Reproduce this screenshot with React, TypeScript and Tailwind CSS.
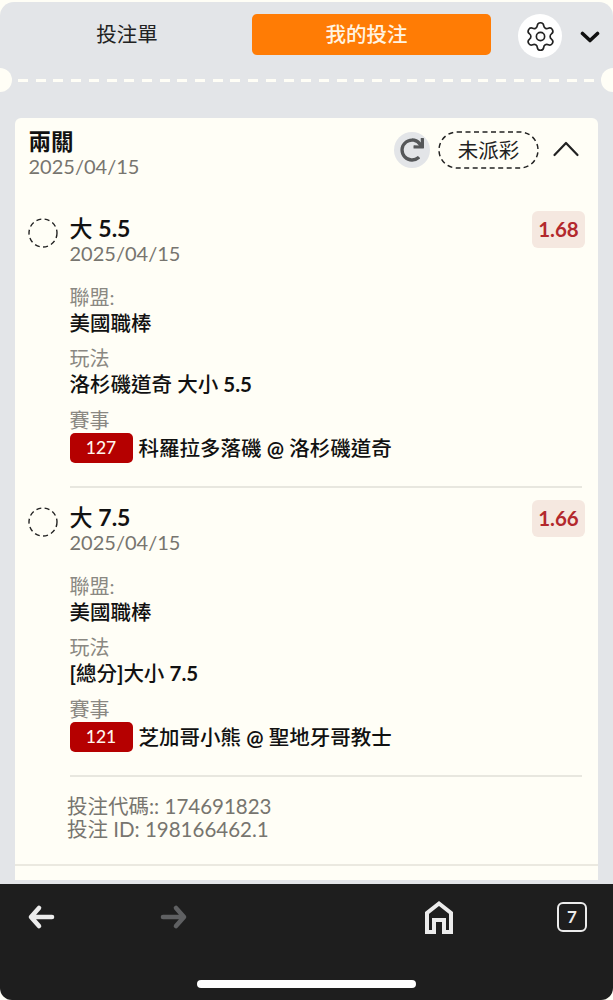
import React from "react";
import { Settings } from "lucide-react";
import { FaRedo } from "react-icons/fa";

function Leg(props: { pick: React.ReactNode; odds: string; play: React.ReactNode; num: string; match: React.ReactNode }) {
  return (
    <div className="flex flex-col">
      <div className="flex items-start pl-[13px] pr-[13px]">
        <svg className="mt-[7px] shrink-0" width="30" height="30" viewBox="0 0 30 30" fill="none" stroke="#222" strokeWidth="1.4" strokeDasharray="5 3.4">
          <circle cx="15" cy="15" r="14" />
        </svg>
        <div className="ml-[11.5px] flex-1">
          <div className="mt-[3px] text-[23px] leading-[28px] font-medium text-[#111]">{props.pick}</div>
          <div className="text-[20px] leading-[23px] text-[#77756f]">2025/04/15</div>
        </div>
        <div className="flex h-[37px] w-[53px] items-center justify-center rounded-[6px] bg-[#f5e8e0] text-[20.5px] font-bold text-[#b3282d]">{props.odds}</div>
      </div>
      <div className="ml-[54.5px] mr-[16px] mt-[19px] flex flex-col">
        <div className="text-[20px] leading-[27px] text-[#8a8882]">聯盟:</div>
        <div className="text-[20.5px] leading-[24px] font-medium text-[#111]">美國職棒</div>
        <div className="mt-[10px] text-[20px] leading-[27px] text-[#8a8882]">玩法</div>
        <div className="text-[20.5px] leading-[25px] font-medium text-[#111]">{props.play}</div>
        <div className="mt-[10px] text-[20px] leading-[27px] text-[#8a8882]">賽事</div>
        <div className="mt-[-1px] flex items-center">
          <div className="flex h-[30px] w-[63px] items-center justify-center rounded-[5px] bg-[#b50000] text-[17.5px] font-medium text-[#fff6ee]">{props.num}</div>
          <div className="ml-[6px] text-[20.5px] leading-[30px] font-medium text-[#111]">{props.match}</div>
        </div>
        <div className="mt-[23px] h-[2px] bg-[#e8e7df]" />
      </div>
    </div>
  );
}

export default function App() {
  return (
    <div className="relative flex h-[1000px] w-[613px] flex-col overflow-hidden bg-[#fffef6] font-['Lato','Noto_Sans_CJK_TC',sans-serif]">
      <main className="mt-[2px] flex min-h-0 flex-1 flex-col overflow-hidden rounded-t-[14px] bg-[#e3e5e8]">
        <div className="flex h-[66px] shrink-0 items-start pt-[12px]">
          <div className="ml-[14px] flex h-[41px] w-[226px] items-center justify-center text-[20.5px] text-[#222]">投注單</div>
          <div className="ml-[12px] flex h-[41px] w-[239px] items-center justify-center rounded-[5px] bg-[#ff7c05] pr-[10px] text-[20.5px] font-medium text-[#fff4e2]">我的投注</div>
          <div className="ml-[27px] flex h-[44px] w-[44px] items-center justify-center rounded-full bg-white">
            <Settings size={33} strokeWidth={1.2} className="text-[#222]" />
          </div>
          <svg className="ml-[18px] mt-[17px]" width="20" height="13" viewBox="0 0 20 13" fill="none" stroke="#111" strokeWidth="3.6" strokeLinecap="round" strokeLinejoin="round">
            <path d="M2.500 2.500 10 9.500l7.500-7" />
          </svg>
        </div>
        <div className="relative h-[24px] shrink-0">
          <div className="mx-[18px] mt-[10.5px] h-[3px] bg-[repeating-linear-gradient(90deg,#fffef6_0,#fffef6_10px,transparent_10px,transparent_17.7px)]" />
          <div className="absolute left-[-12px] top-0 h-[24px] w-[24px] rounded-full bg-[#fffef6]" />
          <div className="absolute right-[-12px] top-0 h-[24px] w-[24px] rounded-full bg-[#fffef6]" />
        </div>
        <section className="mx-[15px] mt-[26px] mb-[4px] flex min-h-0 flex-1 flex-col overflow-hidden rounded-t-[6px] bg-[#fffef6]">
          <div className="flex h-[61px] shrink-0 items-start pl-[13.5px] pr-[18px] pt-[10px]">
            <div className="flex-1">
              <div className="text-[22.5px] leading-[28px] font-bold text-[#111]">兩關</div>
              <div className="text-[20px] leading-[20px] text-[#77756f]">2025/04/15</div>
            </div>
            <div className="mt-[4px] flex h-[36px] w-[36px] items-center justify-center rounded-full bg-[#e3e5e8]">
              <FaRedo size={24} className="text-[#555759]" />
            </div>
            <div className="relative ml-[8px] mt-[3px] flex h-[38px] w-[101px] items-center justify-center text-[20.5px] text-[#222]">
              <svg className="absolute inset-0" width="101" height="38" viewBox="0 0 101 38" fill="none" stroke="#222" strokeWidth="1.5" strokeDasharray="5 3.5">
                <rect x="1" y="1" width="99" height="36" rx="18" />
              </svg>
              未派彩
            </div>
            <svg className="ml-[13px] mt-[12px]" width="28" height="17" viewBox="0 0 28 17" fill="none" stroke="#222" strokeWidth="2.2" strokeLinecap="round" strokeLinejoin="round">
              <path d="M2.500 15 14 3l11.500 12" />
            </svg>
          </div>
          <div className="mt-[32px] flex shrink-0 flex-col gap-[12px]">
            <Leg
              pick={<>大 <b className="font-bold">5.5</b></>}
              odds="1.68"
              play={<>洛杉磯道奇 大小 <b className="font-bold">5.5</b></>}
              num="127"
              match={<>科羅拉多落磯 <b className="font-bold">@</b> 洛杉磯道奇</>}
            />
            <Leg
              pick={<>大 <b className="font-bold">7.5</b></>}
              odds="1.66"
              play={<><b className="font-bold">[</b>總分<b className="font-bold">]</b>大小 <b className="font-bold">7.5</b></>}
              num="121"
              match={<>芝加哥小熊 <b className="font-bold">@</b> 聖地牙哥教士</>}
            />
          </div>
          <div className="ml-[52px] mt-[18px] shrink-0 text-[20.5px] leading-[23px] text-[#77756f]">
            <div>投注代碼:: 174691823</div>
            <div>投注 ID: 198166462.1</div>
          </div>
          <div className="mt-[23px] h-[2px] shrink-0 bg-[#ebe9e0]" />
        </section>
      </main>
      <footer className="relative h-[116px] shrink-0 rounded-b-[12px] bg-[#1e1e1e]">
        <div className="flex h-[66px] items-center pl-[27px] pr-[26px]">
          <svg width="28" height="26" viewBox="0 0 28 26" fill="none" stroke="#ececec" strokeWidth="4.6" strokeLinecap="round" strokeLinejoin="round">
            <path d="M12 4 4 13l8 9M5 13h20" />
          </svg>
          <svg className="ml-[105px]" width="28" height="26" viewBox="0 0 28 26" fill="none" stroke="#5f6062" strokeWidth="4.6" strokeLinecap="round" strokeLinejoin="round">
            <path d="M16 4l8 9-8 9M23 13H3" />
          </svg>
          <svg className="ml-auto" width="30" height="34" viewBox="0 0 30 34" fill="none" stroke="#ececec" strokeWidth="4" strokeLinejoin="miter">
            <path d="M3 32V13L15 3.500 27 13v19h-7V20H10v12H3Z" />
          </svg>
          <div className="ml-[103px] flex h-[30px] w-[30px] items-center justify-center rounded-[6px] border-[2.5px] border-[#ececec] text-[17px] font-bold text-[#ececec]">7</div>
        </div>
        <div className="absolute bottom-[12px] left-[197px] h-[8px] w-[219px] rounded-full bg-white" />
      </footer>
    </div>
  );
}
